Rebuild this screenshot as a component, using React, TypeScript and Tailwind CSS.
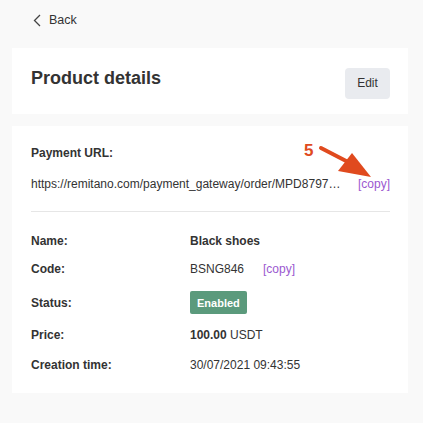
import React from "react";

export default function App() {
  return (
    <div
      className="min-h-[423px] w-[423px] bg-[#f9f9f9] text-[#333333] relative"
      style={{ fontFamily: '"Liberation Sans", Arial, sans-serif' }}
    >
      <div className="h-[48px] flex items-center pl-[33px] pb-[8px]">
        <svg width="8" height="13" viewBox="0 0 8 13" className="mr-[8px]">
          <path d="M7 1 L1.5 6.5 L7 12" fill="none" stroke="#444" strokeWidth="1.3" />
        </svg>
        <span className="text-[12.5px] leading-4 text-[#333]">Back</span>
      </div>

      <div className="ml-3 w-[396px] h-[66px] bg-white flex items-center justify-between pl-[19px] pr-[18px]">
        <h1 className="text-[18px] font-bold leading-5 text-[#333] -mt-[6px]">Product details</h1>
        <button className="w-[45px] h-[31px] mt-[4px] rounded-[4px] bg-[#e9ebef] text-[12px] text-[#333]">
          Edit
        </button>
      </div>

      <div className="ml-3 mt-[12px] w-[396px] bg-white pl-[19px] pr-[18px] pt-[19px]">
        <div className="text-[12px] leading-4 font-bold text-[#333]">Payment URL:</div>
        <div className="mt-[15px] flex items-center text-[12px] leading-4">
          <span className="w-[316px] truncate text-[#333]">
            https://remitano.com/payment_gateway/order/MPD879721345678
          </span>
          <span className="ml-[11px] text-[#9b59d0]">[copy]</span>
        </div>
        <div className="mt-[19px] h-px bg-[#e6e6e6]" />

        <div className="text-[12px] leading-4">
          <div className="mt-[21px] flex items-center">
            <span className="w-[159px] font-bold">Name:</span>
            <span className="font-bold">Black shoes</span>
          </div>
          <div className="mt-[12px] flex items-center">
            <span className="w-[159px] font-bold">Code:</span>
            <span>BSNG846</span>
            <span className="ml-[19px] text-[#9b59d0]">[copy]</span>
          </div>
          <div className="mt-[14px] flex items-center h-[23px]">
            <span className="w-[159px] font-bold">Status:</span>
            <span className="h-[23px] px-[7px] rounded-[2px] bg-[#5b9a7c] text-white font-bold text-[11px] flex items-center">
              Enabled
            </span>
          </div>
          <div className="mt-[13px] flex items-center">
            <span className="w-[159px] font-bold">Price:</span>
            <span>
              <b>100.00</b> USDT
            </span>
          </div>
          <div className="mt-[14px] flex items-center pb-[20px]">
            <span className="w-[159px] font-bold">Creation time:</span>
            <span>30/07/2021 09:43:55</span>
          </div>
        </div>
      </div>

      <span className="absolute left-[304px] top-[141px] text-[17px] font-bold text-[#e04a1e] leading-5">5</span>
      <svg className="absolute left-0 top-0 pointer-events-none" width="423" height="423" viewBox="0 0 423 423">
        <line x1="321" y1="148" x2="350" y2="163" stroke="#e04a1e" strokeWidth="4" strokeLinecap="round" />
        <polygon points="352,153 338,171 371,177" fill="#e04a1e" />
      </svg>
    </div>
  );
}
